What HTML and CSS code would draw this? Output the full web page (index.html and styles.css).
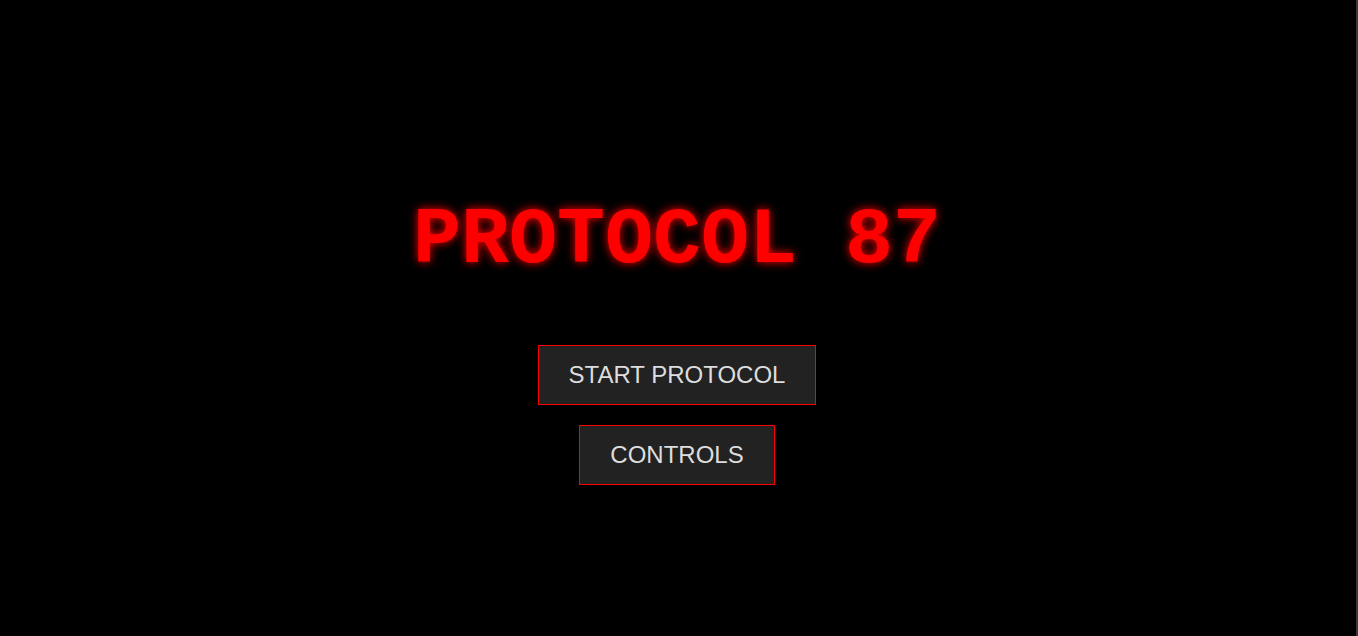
FILE: index.html
```html
<!DOCTYPE html>
<html lang="en">
<head>
    <meta charset="UTF-8">
    <meta name="viewport" content="width=device-width, initial-scale=1.0">
    <title>Protocol 87</title>
    <link rel="stylesheet" href="styles.css">
</head>
<body>
    <div id="menu">
        <h1 class="title">PROTOCOL 87</h1>
        <button class="menu-button" id="start-button">START PROTOCOL</button>
        <button class="menu-button" id="controls-button">CONTROLS</button>
    </div>
</body>
</html>
```

FILE: styles.css
```css
html, body {
    height: 100%;
}
body {
    margin: 0;
    background-color: #000;
    color: #ddd;
    font-family: "Liberation Sans", Arial, sans-serif;
    overflow: hidden;
    border-right: 2px solid #3a3a3a;
    box-sizing: border-box;
}
#menu {
    display: flex;
    flex-direction: column;
    align-items: center;
    justify-content: center;
    height: 100%;
    padding-right: 2px;
    box-sizing: border-box;
}
.title {
    font-family: "Courier New", "Liberation Mono", monospace;
    font-size: 80px;
    font-weight: bold;
    color: #f00;
    text-shadow: 0 0 10px #f00;
    margin: 0.67em 0 0.62em;
}
.menu-button {
    margin: 10px;
    padding: 15px 30px;
    font-family: "Liberation Sans", Arial, sans-serif;
    font-size: 24px;
    color: #ddd;
    background-color: #222;
    border: 1px solid #f00;
    cursor: pointer;
}
.menu-button:hover {
    background-color: #333;
}
```
